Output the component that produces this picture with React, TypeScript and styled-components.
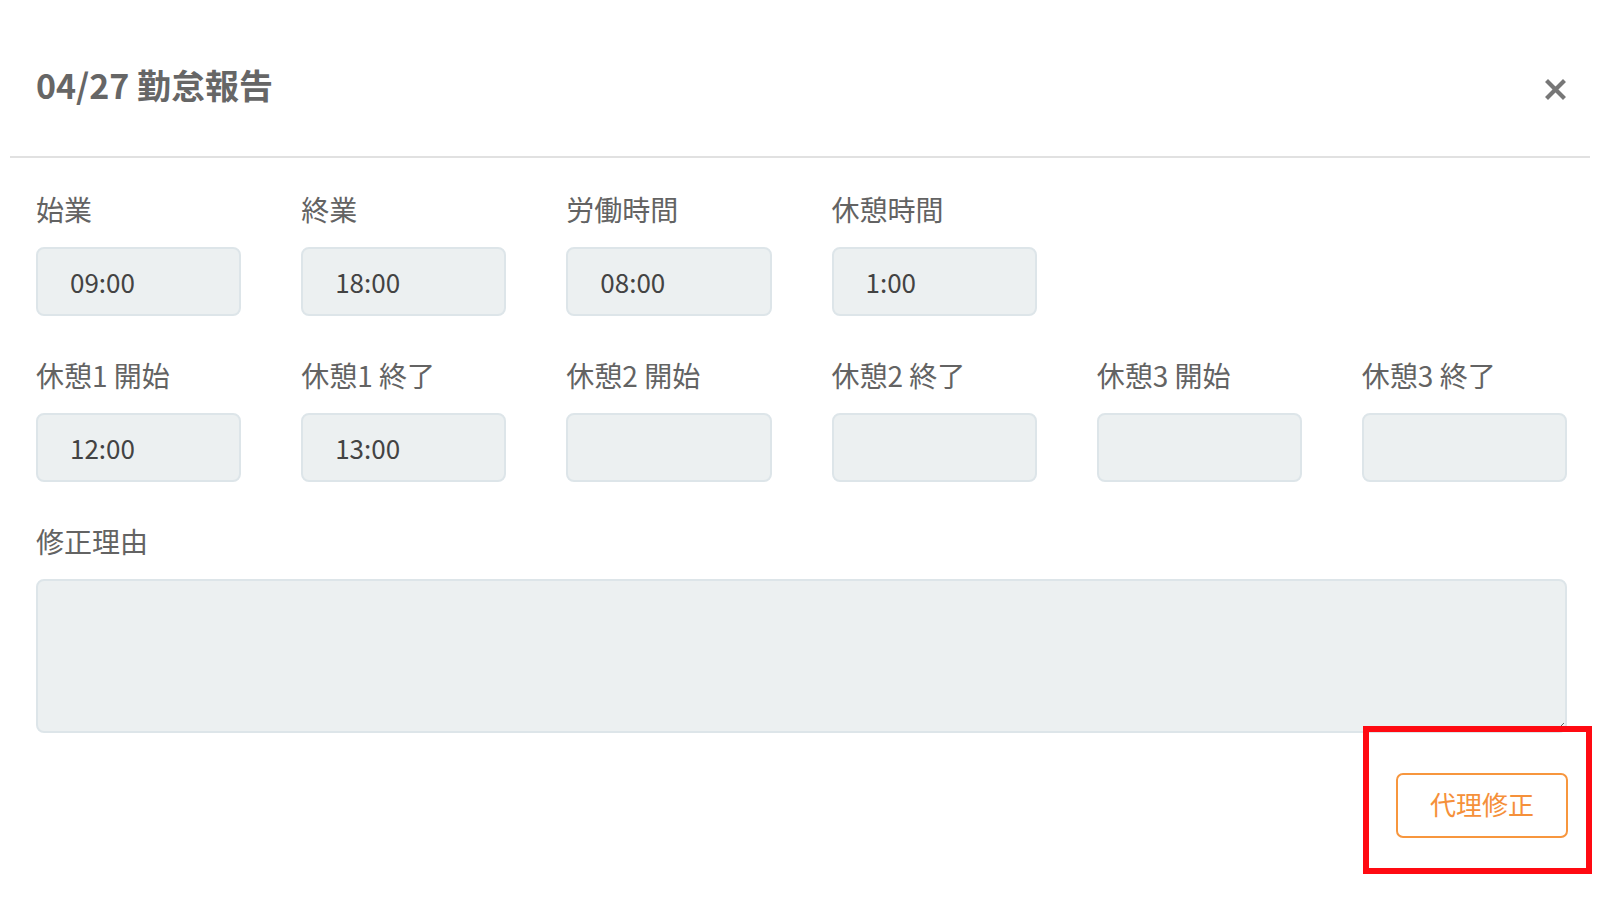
import React, { useState } from "react";
import styled, { createGlobalStyle } from "styled-components";

const GlobalStyle = createGlobalStyle`
  html, body {
    margin: 0;
    padding: 0;
    background: #ffffff;
  }
  body {
    min-height: 100vh;
    font-family: "Noto Sans CJK JP", "Noto Sans", sans-serif;
  }
  * {
    box-sizing: border-box;
  }
`;

const Modal = styled.div`
  width: 1580px;
  margin-left: 10px;
  padding-bottom: 69px;
  background: #ffffff;
`;

const Header = styled.div`
  display: flex;
  justify-content: space-between;
  align-items: flex-start;
  height: 158px;
  padding: 65px 24px 0 26px;
  border-bottom: 2px solid #e1e1e1;
`;

const Title = styled.h2`
  margin: 0;
  font-size: 34px;
  line-height: 40px;
  font-weight: 700;
  color: #666666;
`;

const CloseButton = styled.button`
  width: 21px;
  height: 21px;
  margin-top: 14px;
  padding: 0;
  border: none;
  background: none;
  cursor: pointer;
  display: flex;
`;

const Body = styled.div`
  padding: 35px 23px 0 26px;
`;

const FieldRow = styled.div`
  display: grid;
  grid-template-columns: repeat(6, 1fr);
  column-gap: 60px;
  margin-bottom: 43px;
`;

const Field = styled.div`
  display: flex;
  flex-direction: column;
`;

const Label = styled.label`
  font-size: 28px;
  line-height: 32px;
  color: #636363;
  margin-bottom: 22px;
  white-space: nowrap;
`;

const TimeInput = styled.input`
  width: 100%;
  height: 69px;
  padding: 0 30px 0 32px;
  border: 2px solid #dde5e9;
  border-radius: 8px;
  background: #ecf0f1;
  font-family: "Noto Sans CJK JP", "Noto Sans", sans-serif;
  font-size: 26px;
  color: #434343;
  outline: none;
`;

const TextArea = styled.textarea`
  display: block;
  width: 100%;
  height: 154px;
  padding: 16px 30px;
  border: 2px solid #dde5e9;
  border-radius: 8px;
  background: #ecf0f1;
  font-family: "Noto Sans CJK JP", "Noto Sans", sans-serif;
  font-size: 26px;
  color: #434343;
  outline: none;
`;

const Footer = styled.div`
  display: flex;
  justify-content: flex-end;
  margin-top: 40px;
`;

const ButtonWrap = styled.div`
  position: relative;
  margin-right: -1px;
`;

const ProxyButton = styled.button`
  width: 172px;
  height: 65px;
  padding: 0 0 4px;
  border: 2px solid #f7963e;
  border-radius: 7px;
  background: #ffffff;
  color: #f5903a;
  font-family: "Noto Sans CJK JP", "Noto Sans", sans-serif;
  font-size: 26px;
  cursor: pointer;
`;

// red outline drawn around the highlighted action
const Highlight = styled.div`
  position: absolute;
  top: -47px;
  left: -33px;
  right: -24px;
  bottom: -36px;
  border: 6px solid #ff0a12;
  pointer-events: none;
`;

const rows = [
  [
    { label: "始業", value: "09:00" },
    { label: "終業", value: "18:00" },
    { label: "労働時間", value: "08:00" },
    { label: "休憩時間", value: "1:00" },
  ],
  [
    { label: "休憩1 開始", value: "12:00" },
    { label: "休憩1 終了", value: "13:00" },
    { label: "休憩2 開始", value: "" },
    { label: "休憩2 終了", value: "" },
    { label: "休憩3 開始", value: "" },
    { label: "休憩3 終了", value: "" },
  ],
];

const App: React.FC = () => {
  const [reason, setReason] = useState("");

  return (
    <Modal>
      <GlobalStyle />
      <Header>
        <Title>04/27 勤怠報告</Title>
        <CloseButton aria-label="close">
          <svg width="21" height="21" viewBox="0 0 21 21">
            <path
              d="M3 3 L18 18 M18 3 L3 18"
              stroke="#777777"
              strokeWidth="4.2"
              strokeLinecap="square"
            />
          </svg>
        </CloseButton>
      </Header>
      <Body>
        {rows.map((row, i) => (
          <FieldRow key={i}>
            {row.map((f) => (
              <Field key={f.label}>
                <Label>{f.label}</Label>
                <TimeInput type="text" defaultValue={f.value} />
              </Field>
            ))}
          </FieldRow>
        ))}
        <Field>
          <Label>修正理由</Label>
          <TextArea value={reason} onChange={(e) => setReason(e.target.value)} />
        </Field>
        <Footer>
          <ButtonWrap>
            <ProxyButton>代理修正</ProxyButton>
            <Highlight />
          </ButtonWrap>
        </Footer>
      </Body>
    </Modal>
  );
};

export default App;
